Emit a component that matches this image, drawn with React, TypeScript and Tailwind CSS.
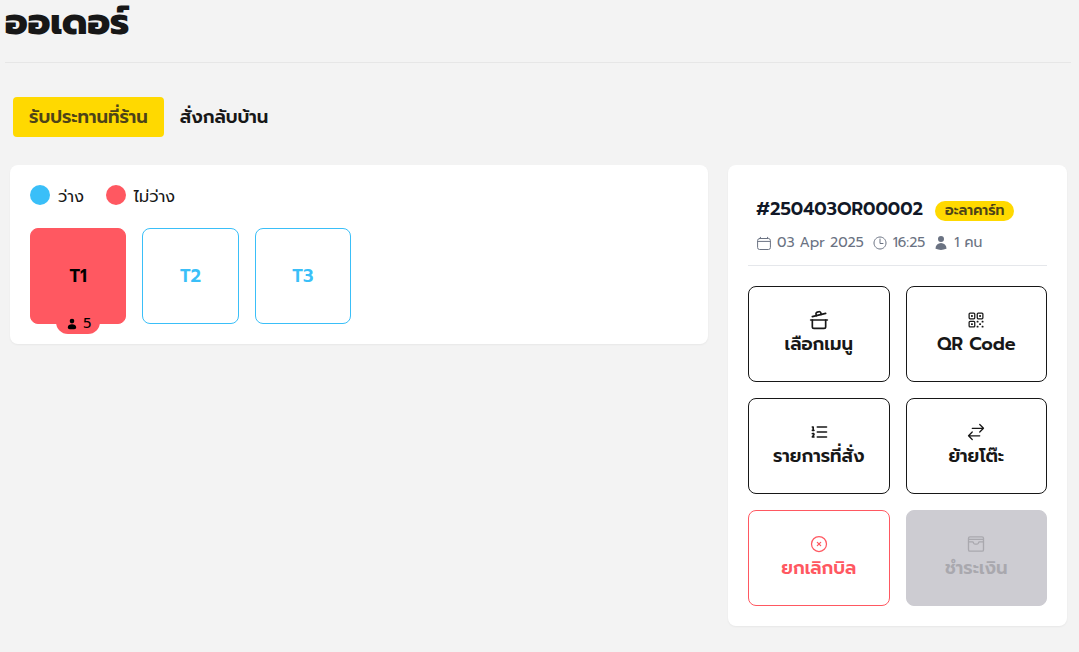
import type { ComponentType, ReactNode } from "react";
import clsx from "clsx";
import { CookingPot } from "lucide-react";
import { HiOutlineArrowsRightLeft, HiOutlineQrCode, HiUser } from "react-icons/hi2";
import { IoTimeOutline } from "react-icons/io5";

type IconProps = { className?: string };

const CalendarIcon = ({ className }: IconProps) => (
  <svg viewBox="0 0 16 16" fill="none" stroke="currentColor" strokeLinecap="round" className={className} aria-hidden="true">
    <rect x="1.6" y="3.5" width="12.8" height="11" rx="2" />
    <path d="M2 6.4h12M4.4 2.3v1.3M11.6 2.3v1.3" />
  </svg>
);

const GuestIcon = ({ className }: IconProps) => (
  <svg viewBox="0 0 24 24" fill="currentColor" className={className} aria-hidden="true">
    <circle cx="12" cy="7" r="4" />
    <path d="M12 12.5c4 0 7.2 2.2 7.2 5.2 0 2.4-1.6 3.3-3.4 3.3H8.2c-1.8 0-3.4-.9-3.4-3.3 0-3 3.2-5.2 7.2-5.2Z" />
  </svg>
);

const OrderedListIcon = ({ className }: IconProps) => (
  <svg
    viewBox="0 0 24 24"
    fill="none"
    stroke="currentColor"
    strokeWidth="2"
    strokeLinecap="round"
    strokeLinejoin="round"
    className={className}
    aria-hidden="true"
  >
    <path d="M10 6h11M10 12h11M10 18h11M4 6h1v4M4 10h2M6 18H4c0-1 2-2 2-3s-1-1.5-2-1" />
  </svg>
);

const CancelIcon = ({ className }: IconProps) => (
  <svg viewBox="0 0 24 24" fill="none" stroke="currentColor" strokeWidth="1.5" strokeLinecap="round" className={className} aria-hidden="true">
    <circle cx="12" cy="12" r="9" />
    <path d="m10 10 4 4M14 10l-4 4" />
  </svg>
);

const WalletIcon = ({ className }: IconProps) => (
  <svg viewBox="0 0 24 24" fill="none" stroke="currentColor" strokeWidth="1.6" strokeLinejoin="round" className={className} aria-hidden="true">
    <rect x="3" y="3.4" width="18" height="17.2" rx="1.8" />
    <path d="M3 6.4h18M3 9.4h4.8c.8 0 1 .5 1.2 1.2.3 1 .9 1.6 1.9 1.6h2.2c1 0 1.6-.6 1.9-1.6.2-.7.4-1.2 1.2-1.2H21" />
  </svg>
);

const tables = [
  { name: "T1", guests: 5 },
  { name: "T2", guests: 0 },
  { name: "T3", guests: 0 },
];

const actions: { label: string; icon: ComponentType<IconProps>; variant: "default" | "danger" | "disabled" }[] = [
  { label: "เลือกเมนู", icon: CookingPot, variant: "default" },
  { label: "QR Code", icon: HiOutlineQrCode, variant: "default" },
  { label: "รายการที่สั่ง", icon: OrderedListIcon, variant: "default" },
  { label: "ย้ายโต๊ะ", icon: HiOutlineArrowsRightLeft, variant: "default" },
  { label: "ยกเลิกบิล", icon: CancelIcon, variant: "danger" },
  { label: "ชำระเงิน", icon: WalletIcon, variant: "disabled" },
];

const Card = ({ children }: { children: ReactNode }) => (
  <div className="rounded-lg bg-white p-5 shadow-xs">{children}</div>
);

const Legend = ({ color, label }: { color: string; label: string }) => (
  <div className="flex items-start gap-2">
    <span className={clsx("size-5 rounded-full", color)} />
    <span>{label}</span>
  </div>
);

const TableButton = ({ name, guests }: { name: string; guests: number }) => (
  <button
    type="button"
    className={clsx(
      "relative aspect-square w-full rounded-lg border text-lg font-semibold",
      guests > 0 ? "border-[#ff5861] bg-[#ff5861] text-black" : "border-[#3abff8] text-[#3abff8]",
    )}
  >
    {name}
    {guests > 0 && (
      <span className="absolute -bottom-[11px] left-1/2 flex h-5 w-11 -translate-x-1/2 items-center justify-center gap-1 rounded-b-xl bg-[#ff5861] text-sm font-normal">
        <GuestIcon className="size-3.5" />
        {guests}
      </span>
    )}
  </button>
);

const Meta = ({ icon: Icon, children }: { icon: ComponentType<IconProps>; children: ReactNode }) => (
  <span className="flex items-center gap-[5px]">
    <Icon className="size-4" />
    {children}
  </span>
);

const ActionButton = ({ label, icon: Icon, variant }: (typeof actions)[number]) => (
  <button
    type="button"
    disabled={variant === "disabled"}
    className={clsx(
      "flex h-24 flex-col items-center justify-center rounded-lg border text-lg font-semibold",
      variant === "default" && "border-[#171717] text-[#171717]",
      variant === "danger" && "border-[#ff5861] text-[#ff5861]",
      variant === "disabled" && "border-[#cdccd2] bg-[#cdccd2] text-[#a9a8ae]",
    )}
  >
    <Icon className="size-5" />
    {label}
  </button>
);

export default function App() {
  return (
    <main className="min-h-screen bg-[#f3f3f3] font-['Prompt','Noto_Sans_Thai','Noto_Sans',sans-serif] text-[#171717]">
      <header className="mr-2 ml-[5px] border-b border-[#e6e6e6] pb-[18px]">
        <h1 className="text-4xl leading-11 font-extrabold">ออเดอร์</h1>
      </header>

      <nav className="flex px-[13px] pt-[34px] text-lg font-semibold">
        <button type="button" className="h-10 rounded bg-[#ffd900] px-4 text-[#4d4318]">
          รับประทานที่ร้าน
        </button>
        <button type="button" className="h-10 px-4">
          สั่งกลับบ้าน
        </button>
      </nav>

      <div className="grid grid-cols-3 items-start gap-5 pt-7 pr-3 pl-2.5">
        <div className="col-span-2">
          <Card>
            <div className="flex gap-[22px] pb-[19px]">
              <Legend color="bg-[#3abff8]" label="ว่าง" />
              <Legend color="bg-[#ff5861]" label="ไม่ว่าง" />
            </div>
            <div className="grid grid-cols-6 gap-4">
              {tables.map((table) => (
                <TableButton key={table.name} {...table} />
              ))}
            </div>
          </Card>
        </div>

        <Card>
          <div className="border-b border-gray-200 px-2 pt-2.5 pb-3">
            <div className="flex items-baseline gap-3">
              <h2 className="text-lg font-semibold text-[#111827]">#250403OR00002</h2>
              <span className="rounded-full bg-[#ffd900] px-2.5 text-sm font-semibold text-[#4d4318]">อะลาคาร์ท</span>
            </div>
            <div className="mt-2.5 flex items-center gap-2 text-sm text-gray-500">
              <Meta icon={CalendarIcon}>03 Apr 2025</Meta>
              <Meta icon={IoTimeOutline}>16:25</Meta>
              <Meta icon={HiUser}>1 คน</Meta>
            </div>
          </div>
          <div className="grid grid-cols-2 gap-4 pt-5">
            {actions.map((action) => (
              <ActionButton key={action.label} {...action} />
            ))}
          </div>
        </Card>
      </div>
    </main>
  );
}
